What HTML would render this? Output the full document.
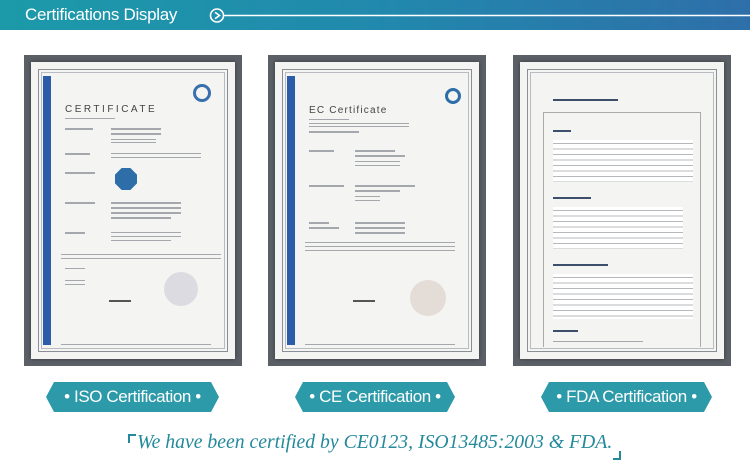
<!DOCTYPE html>
<html><head><meta charset="utf-8"><style>
*{margin:0;padding:0;box-sizing:border-box}
body{width:750px;height:475px;background:#fff;position:relative;overflow:hidden;font-family:"Liberation Sans",sans-serif}
.hdr{position:absolute;left:0;top:0;width:750px;height:30px;background:linear-gradient(90deg,#1c9aa9 0%,#2189ad 50%,#2e6fa9 100%)}
.hdr .t{position:absolute;left:25px;top:5px;color:#fff;font-size:17px;letter-spacing:-0.3px}
.frame{position:absolute;top:55px;width:218px;height:311px;background:#5b6066}
.paper{position:absolute;left:7px;top:7px;right:7px;bottom:7px;background:#f4f4f2;box-shadow:0 0 4px rgba(0,0,0,.4)}
.b1{position:absolute;left:7px;top:7px;right:7px;bottom:7px;border:1px solid #8a8f95}
.b2{position:absolute;left:10px;top:10px;right:10px;bottom:10px;border:1px solid #b8bcc0}
.side{position:absolute;left:12px;top:14px;bottom:14px;width:8px;background:#2c5da8}
.ln{position:absolute;height:2px;background:#a4a8ad}
.tx{position:absolute;font-size:4px;color:#555}
.badge{position:absolute;top:382px;height:30px;background:#2c9aa9;color:#fff;font-size:17px;line-height:30px;text-align:center;clip-path:polygon(8px 0,calc(100% - 8px) 0,100% 50%,calc(100% - 8px) 100%,8px 100%,0 50%);letter-spacing:-0.4px}
.tag{position:absolute;left:137px;top:431px;font-family:"Liberation Serif",serif;font-style:italic;color:#23899b;font-size:20px;white-space:nowrap;transform:scaleX(0.985);transform-origin:left top}
</style></head><body>
<div class="hdr"><div class="t">Certifications Display</div>
<svg style="position:absolute;left:208px;top:7px" width="542" height="17"><circle cx="9" cy="8.5" r="6.5" fill="none" stroke="#fff" stroke-width="1.6"/><path d="M7 5.3 L11.5 8.5 L7 11.7" fill="none" stroke="#fff" stroke-width="1.6"/><line x1="15.5" y1="8.5" x2="542" y2="8.5" stroke="#fff" stroke-width="1.6"/></svg>
</div>

<div class="frame" style="left:24px"><div class="paper"><div class="b1"></div><div class="b2"></div><div class="side"></div>
<div class="tx" style="left:34px;top:42px;font-size:10px;letter-spacing:2.5px;color:#444">CERTIFICATE</div>
<div class="ln" style="left:34px;top:56px;width:50px;height:1px"></div>
<div class="ln" style="left:34px;top:66px;width:28px"></div><div class="ln" style="left:80px;top:66px;width:50px"></div><div class="ln" style="left:80px;top:71px;width:50px"></div>
<div class="ln" style="left:80px;top:77px;width:45px;height:1px"></div><div class="ln" style="left:80px;top:80px;width:45px;height:1px"></div>
<div class="ln" style="left:34px;top:91px;width:25px"></div><div class="ln" style="left:80px;top:91px;width:90px;height:1px"></div><div class="ln" style="left:80px;top:95px;width:90px;height:1px"></div>
<div class="ln" style="left:34px;top:110px;width:30px"></div>
<div style="position:absolute;left:84px;top:106px;width:22px;height:22px;background:#2e6ea8;clip-path:polygon(30% 0,70% 0,100% 30%,100% 70%,70% 100%,30% 100%,0 70%,0 30%)"></div>
<div style="position:absolute;left:162px;top:22px;width:18px;height:18px;border-radius:50%;border:3px solid #3a6fae"></div>
<div class="ln" style="left:34px;top:140px;width:30px"></div><div class="ln" style="left:80px;top:140px;width:70px"></div><div class="ln" style="left:80px;top:145px;width:70px"></div><div class="ln" style="left:80px;top:150px;width:70px"></div><div class="ln" style="left:80px;top:155px;width:60px"></div>
<div class="ln" style="left:34px;top:170px;width:20px"></div><div class="ln" style="left:80px;top:170px;width:70px;height:1px"></div><div class="ln" style="left:80px;top:174px;width:70px;height:1px"></div><div class="ln" style="left:80px;top:178px;width:60px;height:1px"></div>
<div class="ln" style="left:30px;top:192px;width:160px;height:1px"></div><div class="ln" style="left:30px;top:196px;width:160px;height:1px"></div>
<div class="ln" style="left:34px;top:206px;width:20px;height:1px"></div><div class="ln" style="left:34px;top:218px;width:20px;height:1px"></div><div class="ln" style="left:34px;top:222px;width:20px;height:1px"></div>
<div style="position:absolute;left:133px;top:210px;width:34px;height:34px;border-radius:50%;background:#dcdbe2"></div>
<div class="ln" style="left:78px;top:238px;width:22px;background:#555"></div>
<div class="ln" style="left:30px;top:282px;width:150px;height:1px"></div>
</div></div>

<div class="frame" style="left:268px"><div class="paper"><div class="b1"></div><div class="b2"></div><div class="side"></div>
<div class="tx" style="left:34px;top:43px;font-size:10px;letter-spacing:1.2px;color:#444">EC Certificate</div>
<div class="ln" style="left:34px;top:57px;width:40px;height:1px"></div><div class="ln" style="left:34px;top:61px;width:100px;height:1px"></div><div class="ln" style="left:34px;top:64px;width:100px;height:1px"></div><div class="ln" style="left:34px;top:69px;width:50px"></div>
<div style="position:absolute;left:170px;top:26px;width:16px;height:16px;border-radius:50%;border:3px solid #2e6ea8"></div>
<div class="ln" style="left:34px;top:88px;width:25px"></div><div class="ln" style="left:80px;top:88px;width:40px"></div><div class="ln" style="left:80px;top:93px;width:50px"></div><div class="ln" style="left:80px;top:99px;width:45px;height:1px"></div><div class="ln" style="left:80px;top:103px;width:45px;height:1px"></div>
<div class="ln" style="left:34px;top:123px;width:35px"></div><div class="ln" style="left:80px;top:123px;width:60px"></div><div class="ln" style="left:80px;top:128px;width:45px"></div><div class="ln" style="left:80px;top:134px;width:25px;height:1px"></div><div class="ln" style="left:80px;top:138px;width:25px;height:1px"></div>
<div class="ln" style="left:34px;top:160px;width:20px"></div><div class="ln" style="left:34px;top:165px;width:30px"></div><div class="ln" style="left:80px;top:160px;width:50px"></div><div class="ln" style="left:80px;top:165px;width:50px"></div><div class="ln" style="left:80px;top:170px;width:50px"></div>
<div class="ln" style="left:30px;top:180px;width:150px;height:1px"></div><div class="ln" style="left:30px;top:184px;width:150px;height:1px"></div><div class="ln" style="left:30px;top:188px;width:150px;height:1px"></div>
<div style="position:absolute;left:135px;top:218px;width:36px;height:36px;border-radius:50%;background:#e4dcd6"></div>
<div class="ln" style="left:78px;top:238px;width:22px;background:#555"></div>
<div class="ln" style="left:30px;top:282px;width:150px;height:1px"></div>
</div></div>

<div class="frame" style="left:513px"><div class="paper"><div class="b1"></div><div class="b2"></div>
<div class="ln" style="left:33px;top:37px;width:65px;background:#3d4e6a"></div>
<div style="position:absolute;left:23px;top:50px;right:23px;bottom:12px;border:1px solid #aaa;border-bottom:none"></div>
<div class="ln" style="left:33px;top:68px;width:18px;background:#3d4e6a"></div>
<div style="position:absolute;left:33px;top:78px;width:140px;height:42px;background:repeating-linear-gradient(#fff 0 3px,#b5b8bd 3px 4px,#fff 4px 5.5px)"></div>
<div class="ln" style="left:33px;top:135px;width:38px;background:#3d4e6a"></div>
<div style="position:absolute;left:33px;top:145px;width:130px;height:42px;background:repeating-linear-gradient(#fff 0 3px,#b5b8bd 3px 4px,#fff 4px 5.5px)"></div>
<div class="ln" style="left:33px;top:202px;width:55px;background:#3d4e6a"></div>
<div style="position:absolute;left:33px;top:212px;width:140px;height:45px;background:repeating-linear-gradient(#fff 0 3px,#b5b8bd 3px 4px,#fff 4px 5.5px)"></div>
<div class="ln" style="left:33px;top:268px;width:25px;background:#3d4e6a"></div>
<div class="ln" style="left:33px;top:279px;width:90px;height:1px"></div>
</div></div>

<div class="badge" style="left:46px;width:173px">• ISO Certification •</div>
<div class="badge" style="left:295px;width:160px">• CE Certification •</div>
<div class="badge" style="left:541px;width:171px">• FDA Certification •</div>

<svg style="position:absolute;left:128px;top:434px" width="500" height="26"><path d="M1 9 V1 H8" fill="none" stroke="#23899b" stroke-width="2"/><path d="M492 17 V25 H485" fill="none" stroke="#23899b" stroke-width="2"/></svg>
<div class="tag">We have been certified by CE0123, ISO13485:2003 &amp; FDA.</div>
</body></html>
